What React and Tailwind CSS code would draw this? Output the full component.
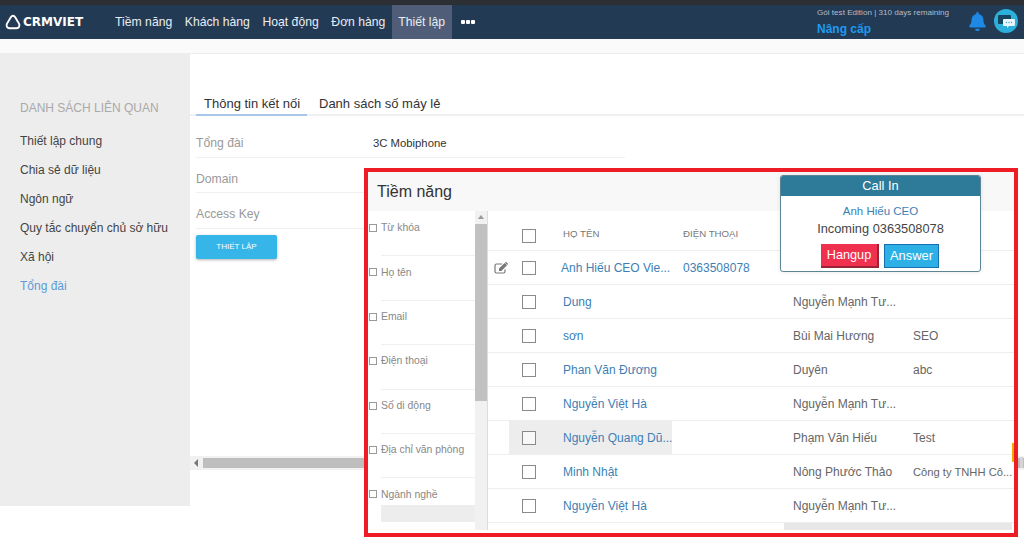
import React from "react";
import { FaBell } from "react-icons/fa";

const menu = ["Tiềm năng", "Khách hàng", "Hoạt động", "Đơn hàng"];
const lienQuan = ["Thiết lập chung", "Chia sẻ dữ liệu", "Ngôn ngữ", "Quy tắc chuyển chủ sở hữu", "Xã hội"];
const boLoc = ["Từ khóa", "Họ tên", "Email", "Điện thoại", "Số di động", "Địa chỉ văn phòng", "Ngành nghề"];
const dong = [
  { ten: "Anh Hiếu CEO Vie...", dt: "0363508078", chu: "", cty: "", icon: true },
  { ten: "Dung", dt: "", chu: "Nguyễn Mạnh Tư...", cty: "" },
  { ten: "sơn", dt: "", chu: "Bùi Mai Hương", cty: "SEO" },
  { ten: "Phan Văn Đương", dt: "", chu: "Duyên", cty: "abc" },
  { ten: "Nguyễn Việt Hà", dt: "", chu: "Nguyễn Mạnh Tư...", cty: "" },
  { ten: "Nguyễn Quang Dũ...", dt: "", chu: "Phạm Văn Hiếu", cty: "Test", chon: true },
  { ten: "Minh Nhật", dt: "", chu: "Nông Phước Thảo", cty: "Công ty TNHH Cô...", dai: true },
  { ten: "Nguyễn Việt Hà", dt: "", chu: "Nguyễn Mạnh Tư...", cty: "" },
];

const Logo = () => (
  <svg width="16" height="16" viewBox="0 0 16 16" fill="none" stroke="white" strokeWidth="1.9">
    <path d="M8 1.8 C9 1.8 9.6 2.4 10.2 3.3 L14 9.6 C15.2 11.8 14 14.2 11.4 14.2 L4.6 14.2 C2 14.2 0.8 11.8 2 9.6 L5.8 3.3 C6.4 2.4 7 1.8 8 1.8 Z" />
  </svg>
);

const ChatIcon = () => (
  <svg width="24" height="24" viewBox="0 0 24 24">
    <circle cx="12" cy="12" r="12" fill="#2bb0dc" />
    <rect x="4" y="6" width="13" height="9" rx="1" fill="#16465f" />
    <path d="M10 10h10a1 1 0 0 1 1 1v5a1 1 0 0 1-1 1h-5l-2 2v-2h-3a1 1 0 0 1-1-1v-5a1 1 0 0 1 1-1z" fill="#e8f6fb" />
    <circle cx="12.5" cy="13.5" r="0.7" fill="#2bb0dc" />
    <circle cx="15" cy="13.5" r="0.7" fill="#2bb0dc" />
    <circle cx="17.5" cy="13.5" r="0.7" fill="#2bb0dc" />
  </svg>
);

const EditIcon = () => (
  <svg width="15" height="12" viewBox="0 0 15 12" className="block">
    <path d="M11 7.5V9.5a1.5 1.5 0 0 1-1.5 1.5h-7A1.5 1.5 0 0 1 1 9.5v-6A1.5 1.5 0 0 1 2.5 2H8" fill="none" stroke="#777" strokeWidth="1.2" />
    <path d="M5 6.6 10.6 1l2.4 2.3-5.6 5.6H5z" fill="#777" />
    <path d="M11.4.3a.8.8 0 0 1 1.1 0l1.2 1.2a.8.8 0 0 1 0 1.1l-.4.4L11 .7z" fill="#777" />
  </svg>
);

const HoChon = () => <span className="block w-[14px] h-[14px] border border-[#8a8a8a] bg-white/60 shrink-0" />;

const App = () => {
  return (
    <div className="relative w-[1024px] h-[541px] overflow-hidden bg-white font-['Liberation_Sans',Arial,sans-serif]">
      <div className="h-[5px] bg-[#2c2f33]" />
      <header className="h-[34px] bg-[#233a55] flex items-stretch text-white shadow-[0_1px_2px_rgba(0,0,0,0.35)]">
        <div className="w-[108.8px] pl-[5px] flex items-center gap-[2px]">
          <Logo />
          <span className="font-['DejaVu_Sans',sans-serif] font-bold text-[12px] leading-none">CRMVIET</span>
        </div>
        <nav className="flex items-stretch text-[12.2px] text-[#e8edf2]">
          {menu.map((m) => (
            <span key={m} className="px-[6.3px] flex items-center whitespace-nowrap">{m}</span>
          ))}
          <span className="w-[60px] bg-[#4f5d78] flex items-center justify-center whitespace-nowrap">Thiết lập</span>
          <span className="ml-[9px] flex items-center gap-[1px]">
            <i className="w-[4px] h-[4px] rounded-[1px] bg-white" />
            <i className="w-[4px] h-[4px] rounded-[1px] bg-white" />
            <i className="w-[4px] h-[4px] rounded-[1px] bg-white" />
          </span>
        </nav>
        <div className="ml-auto w-[207px] flex items-center">
          <div className="w-[151px] leading-none">
            <div className="text-[8.1px] text-[#b3bcc7] mb-[5px] whitespace-nowrap">Gói test Edition | 310 days remaining</div>
            <div className="text-[12px] font-bold text-[#1d9bf0]">Nâng cấp</div>
          </div>
          <FaBell className="text-[#1e88e5] text-[19px] -mt-[2px]" />
          <span className="ml-[7px] -mt-[2px]"><ChatIcon /></span>
        </div>
      </header>

      <div className="h-[15px] bg-[#fafafa] border-b border-[#eeeeee]" />

      <main className="flex h-[452px]">
        <aside className="w-[190px] bg-[#ededed] pt-[46px] pl-[20px] text-[12px] text-[#444]">
          <h3 className="text-[#a9a9a9] text-[12px] h-[16px] leading-[16px] mb-[11px]">DANH SÁCH LIÊN QUAN</h3>
          {lienQuan.map((m) => (
            <div key={m} className="h-[29px] leading-[29px]">{m}</div>
          ))}
          <div className="h-[29px] leading-[29px] text-[#5c9bd8]">Tổng đài</div>
        </aside>

        <section className="flex-1 flex flex-col">
          <div className="mt-[39px] h-[23px] border-b-2 border-[#f0f0f0] flex text-[13px] text-[#333] whitespace-nowrap">
            <div className="ml-[6px] w-[111px] h-[23px] pl-[8px] border-b-2 border-[#a8c7e8] leading-[22px]">Thông tin kết nối</div>
            <div className="ml-[12px] leading-[22px]">Danh sách số máy lẻ</div>
          </div>
          <div className="ml-[6px] w-[429px] mt-[9px] text-[12.2px] text-[#999]">
            <div className="h-[33px] border-b border-[#f0f0f0] flex items-center pt-[5px]">
              <span className="w-[177px]">Tổng đài</span>
              <span className="text-[11.3px] text-[#333]">3C Mobiphone</span>
            </div>
            <div className="h-[35px] pt-[13px] border-b border-[#f0f0f0] leading-[17px]">Domain</div>
            <div className="h-[36px] pt-[13px] border-b border-[#f0f0f0] leading-[17px]">Access Key</div>
          </div>
          <button className="ml-[6px] mt-[6px] w-[81px] h-[24px] bg-[#35b5e8] rounded-[2px] text-white text-[8px] shadow-[0_1px_3px_rgba(0,0,0,0.3)]">THIẾT LẬP</button>
          <div className="mt-[197px] h-[14px] bg-[#f1f1f1] flex items-center pl-[4px]">
            <span className="w-0 h-0 border-y-[4px] border-y-transparent border-r-[4px] border-r-[#777]" />
            <span className="ml-[5px] h-[10px] flex-1 bg-[#bebebe]" />
          </div>
        </section>
      </main>

      {/* Thanh cuộn trang bên phải khung */}
      <span className="absolute left-[1020px] top-[457px] w-[3px] h-[11px] bg-[#d5d5d5]" />

      {/* Khung đỏ nổi phía trên trang */}
      <div className="absolute left-[364px] top-[168px] w-[654px] h-[369px] border-4 border-[#ee1c25] bg-white flex flex-col">
        <div className="h-[39px] shrink-0 bg-[#f8f8f8] pl-[9px] pt-[1px] flex items-center text-[16px] text-[#333]">Tiềm năng</div>
        <div className="flex flex-1 min-h-0 mb-[3px]">
          <div className="w-[107px] shrink-0 pt-[7px] flex flex-col">
            {boLoc.map((b, i) => (
              <div key={b} className="h-[44.4px] shrink-0 flex flex-col">
                <div className="flex items-center gap-[4px] pl-[1px] h-[20px] text-[10.4px] text-[#888] whitespace-nowrap">
                  <span className="w-[8px] h-[8px] border border-[#999] shrink-0" />
                  {b}
                </div>
                {i < 6 && <div className="ml-[13px] mt-[17.4px] border-b border-[#efefef]" />}
              </div>
            ))}
            <div className="ml-[13px] -mt-[24px] h-[17px] bg-[#ededed]" />
          </div>
          <div className="w-[12px] shrink-0 bg-[#f1f1f1] flex flex-col items-center">
            <span className="mt-[4px] w-0 h-0 border-x-[3px] border-x-transparent border-b-[4px] border-b-[#999]" />
            <span className="mt-[5px] w-full h-[177px] bg-[#c1c1c1]" />
          </div>
          <div className="w-[1px] shrink-0 bg-[#dddddd]" />

          <div className="flex-1 min-w-0 relative text-[12px]">
            <div className="h-[40px] pt-[10px] flex items-center border-b border-[#eeeeee] text-[9.7px] text-[#777]">
              <div className="w-[34px]" />
              <HoChon />
              <div className="pl-[27px] pb-[2px] w-[147px]">HỌ TÊN</div>
              <div className="pb-[2px]">ĐIỆN THOẠI</div>
            </div>
            {dong.map((d, i) => (
              <div key={i} className="h-[34px] flex items-center border-b border-[#eeeeee]">
                <div className="w-[34px] shrink-0 pl-[6px] pt-[1px]">{d.icon && <EditIcon />}</div>
                <div className={`flex items-center h-full shrink-0 pt-[1px] ${d.chon ? "bg-[#ededed] -ml-[13px] pl-[13px]" : ""}`}>
                  <HoChon />
                  <div className={`w-[136px] text-[#3d7fb5] ${d.icon ? "pl-[25px]" : "pl-[27px]"} whitespace-nowrap`}>{d.ten}</div>
                </div>
                <div className="w-[121px] pl-[11px] pt-[1px] text-[#3d7fb5] shrink-0">{d.dt}</div>
                <div className="w-[120px] pt-[1px] text-[#666] whitespace-nowrap shrink-0">{d.chu}</div>
                <div className={`pt-[1px] text-[#666] whitespace-nowrap ${d.dai ? "text-[11.2px]" : ""}`}>{d.cty}</div>
              </div>
            ))}
            <div className="ml-[296px] mr-[2px] h-[7px] bg-[#e8e8e8]" />
            <span className="absolute right-0 top-[232px] w-[2px] h-[19px] bg-[#f5a800]" />
          </div>
        </div>
      </div>

      {/* Cửa sổ cuộc gọi đến */}
      <div className="absolute left-[780px] top-[175px] w-[201px] h-[97px] bg-white border border-[#5d8597] rounded-[3px] overflow-hidden text-center shadow-[0_0_4px_rgba(0,0,0,0.1)]">
        <div className="h-[20px] bg-[#2e7a99] text-white text-[12.8px] leading-[20px]">Call In</div>
        <div className="mt-[8px] text-[11.5px] text-[#3d7fb5] leading-[14px]">Anh Hiếu CEO</div>
        <div className="mt-[2px] text-[12.8px] text-[#444] leading-[18px]">Incoming 0363508078</div>
        <div className="mt-[6px] flex justify-center gap-[5px] pr-[1px]">
          <button className="w-[58px] h-[24px] pt-[2px] bg-[#f0304f] border-b-2 border-r-2 border-[#9c2236] text-white text-[12.7px]">Hangup</button>
          <button className="w-[55px] h-[24px] bg-[#2cb0e6] border border-[#1670b0] text-white text-[12.9px]">Answer</button>
        </div>
      </div>
    </div>
  );
};

export default App;
